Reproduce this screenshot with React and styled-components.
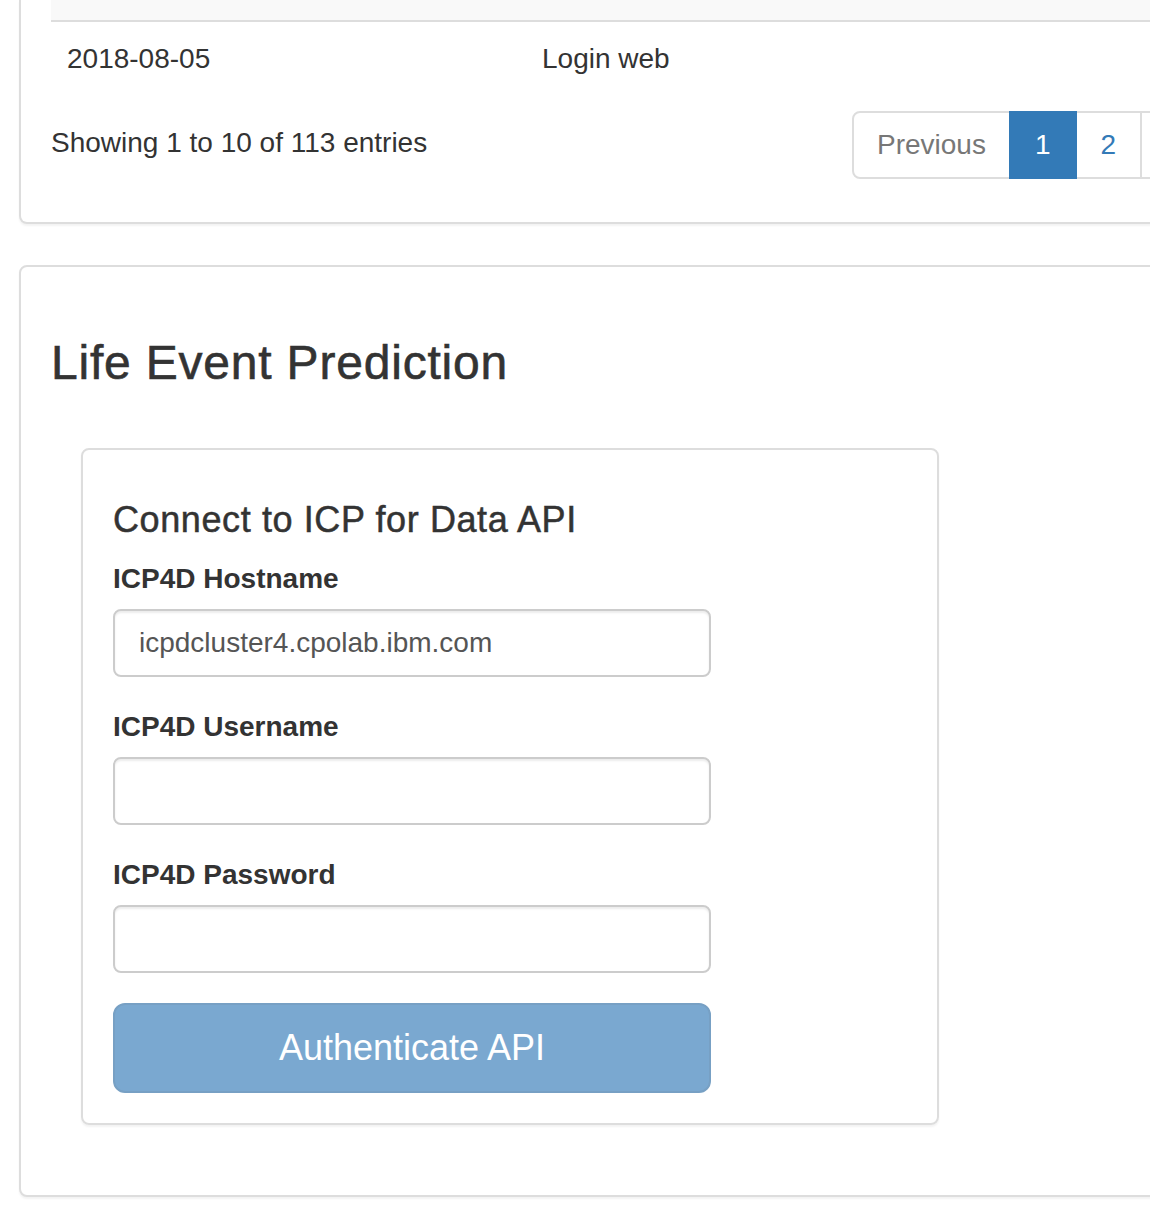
import React from 'react';
import styled, { createGlobalStyle } from 'styled-components';

const GlobalStyle = createGlobalStyle`
  html, body {
    margin: 0;
    background: #fff;
  }
  body {
    font-family: "Liberation Sans", Arial, Helvetica, sans-serif;
    font-size: 28px;
    line-height: 1.42857;
    color: #333;
  }
  * {
    box-sizing: border-box;
  }
`;

const Page = styled.div`
  width: 1150px;
  height: 1218px;
  overflow: hidden;
  padding-left: 19px;
`;

const Panel = styled.div`
  width: 1300px;
  background: #fff;
  border: 2px solid #ddd;
  border-top: ${props => (props.$cut ? 'none' : '2px solid #ddd')};
  border-radius: ${props => (props.$cut ? '0 0 8px 8px' : '8px')};
  box-shadow: 0 2px 2px rgba(0, 0, 0, 0.05);
  padding: ${props => (props.$cut ? '0 30px 30px' : '30px')};
  margin-bottom: 41px;
`;

const Table = styled.div`
  display: grid;
  grid-template-columns: 475px 1fr;
`;

const HeadCell = styled.div`
  height: 22px;
  background: #f9f9f9;
  border-bottom: 2px solid #ddd;
`;

const Cell = styled.div`
  padding: 17px 16px 16px;
  line-height: 40px;
`;

const Footer = styled.div`
  display: flex;
  align-items: center;
  margin-top: 14px;
  margin-bottom: 11px;
`;

const Info = styled.div`
  flex: 0 0 801px;
  line-height: 40px;
  margin-top: -4px;
`;

const Pager = styled.ul`
  display: flex;
  list-style: none;
  margin: 2px 0;
  padding: 0;
`;

const PageItem = styled.li`
  padding: 12px ${props => (props.$first ? '23px' : '24px')};
  line-height: 40px;
  border: 2px solid ${props => (props.$active ? '#337ab7' : '#ddd')};
  margin-left: ${props => (props.$first ? '0' : '-2px')};
  background: ${props => (props.$active ? '#337ab7' : '#fff')};
  color: ${props => (props.$active ? '#fff' : props.$disabled ? '#777' : '#337ab7')};
  border-radius: ${props => (props.$first ? '8px 0 0 8px' : '0')};
  position: relative;
  z-index: ${props => (props.$active ? 2 : 1)};
`;

const Title = styled.h3`
  font-size: 48px;
  font-weight: 500;
  line-height: 1.1;
  letter-spacing: 0.8px;
  -webkit-text-stroke: 0.6px currentColor;
  margin: 40px 0 58px;
`;

const Well = styled.div`
  width: 858px;
  margin-left: 30px;
  margin-bottom: 40px;
  padding: 30px;
  border: 2px solid #ddd;
  border-radius: 8px;
  box-shadow: 0 2px 2px rgba(0, 0, 0, 0.05);
`;

const Subtitle = styled.h4`
  font-size: 36px;
  font-weight: 500;
  line-height: 1.1;
  letter-spacing: 0.6px;
  -webkit-text-stroke: 0.5px currentColor;
  margin: 20px 0 20px;
`;

const Group = styled.div`
  width: 598px;
  margin-bottom: 30px;
`;

const Label = styled.label`
  display: block;
  font-weight: 700;
  line-height: 40px;
  margin-bottom: 10px;
`;

const Input = styled.input`
  display: block;
  width: 100%;
  height: 68px;
  padding: 12px 24px;
  font-family: inherit;
  font-size: 28px;
  color: #555;
  background: #fff;
  border: 2px solid #ccc;
  border-radius: 8px;
  box-shadow: inset 0 2px 2px rgba(0, 0, 0, 0.075);
  outline: none;
`;

const Button = styled.button`
  display: block;
  width: 598px;
  height: 90px;
  font-family: inherit;
  font-size: 36px;
  color: #fff;
  background: #7aa8d0;
  border: 2px solid #77a0c4;
  border-radius: 12px;
  cursor: not-allowed;
`;

const pages = [
  { label: 'Previous', disabled: true, first: true },
  { label: '1', active: true },
  { label: '2' },
  { label: '3' },
  { label: '4' },
  { label: '5' },
  { label: '…', disabled: true },
  { label: '12' },
  { label: 'Next' },
];

export default function App() {
  return (
    <Page>
      <GlobalStyle />
      <Panel $cut>
        <Table>
          <HeadCell />
          <HeadCell />
          <Cell>2018-08-05</Cell>
          <Cell>Login web</Cell>
        </Table>
        <Footer>
          <Info>Showing 1 to 10 of 113 entries</Info>
          <Pager>
            {pages.map(p => (
              <PageItem key={p.label} $first={p.first} $active={p.active} $disabled={p.disabled}>
                {p.label}
              </PageItem>
            ))}
          </Pager>
        </Footer>
      </Panel>

      <Panel>
        <Title>Life Event Prediction</Title>
        <Well>
          <Subtitle>Connect to ICP for Data API</Subtitle>
          <Group>
            <Label>ICP4D Hostname</Label>
            <Input defaultValue="icpdcluster4.cpolab.ibm.com" />
          </Group>
          <Group>
            <Label>ICP4D Username</Label>
            <Input />
          </Group>
          <Group>
            <Label>ICP4D Password</Label>
            <Input type="password" />
          </Group>
          <Button disabled>Authenticate API</Button>
        </Well>
      </Panel>
    </Page>
  );
}
